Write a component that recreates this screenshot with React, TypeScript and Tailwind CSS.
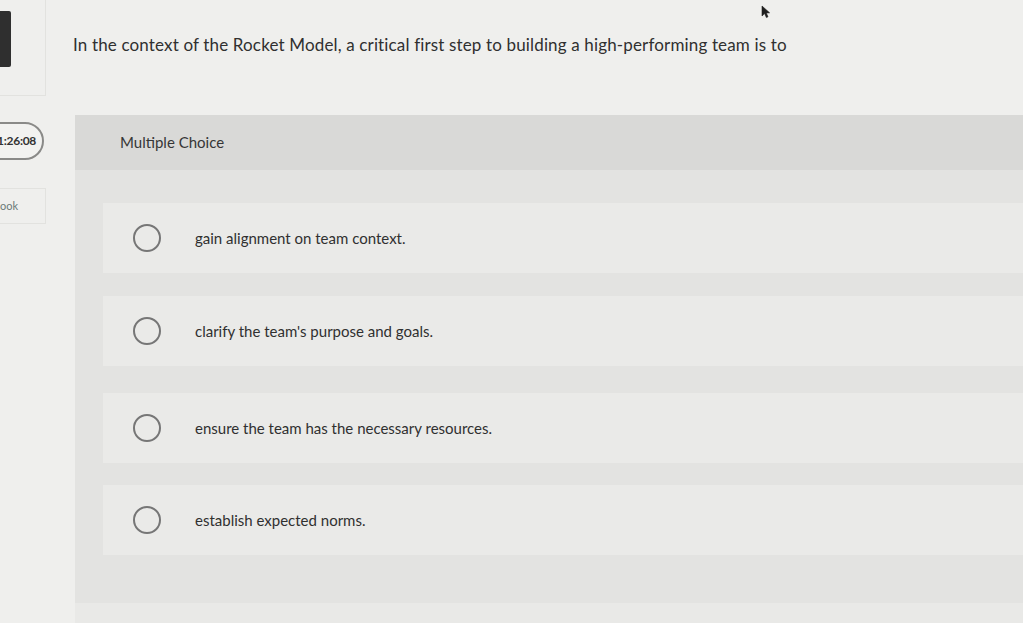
import React from 'react';

const OPTIONS = [
  'gain alignment on team context.',
  "clarify the team's purpose and goals.",
  'ensure the team has the necessary resources.',
  'establish expected norms.',
];

function Cursor() {
  return (
    <svg className="absolute left-[761px] top-[5px]" width="10" height="14" viewBox="0 0 10 14">
      <path d="M1 1 L1 11 L3.6 8.6 L5.4 12.6 L7 11.8 L5.3 8 L8.6 7.8 Z" fill="#1f1f1f" stroke="#1f1f1f" strokeWidth="0.6" />
    </svg>
  );
}

function OptionRow({ label, gapClass }: { label: string; gapClass: string }) {
  return (
    <div className={gapClass}>
      <div className="flex h-[70px] items-center bg-[#eaeae8] pl-[30px]">
        <span className="h-[28px] w-[28px] shrink-0 rounded-full border-2 border-[#767676]" />
        <span className="ml-[34px] text-[15px] text-[#303030]">{label}</span>
      </div>
    </div>
  );
}

export default function App() {
  return (
    <div
      className="relative flex h-[623px] w-full overflow-hidden bg-[#efefed]"
      style={{ fontFamily: 'Lato, "Open Sans", sans-serif' }}
    >
      <aside className="flex w-[46px] shrink-0 flex-col">
        <div className="h-[96px] shrink-0 border-r border-b border-[#e2e2df] pt-[11px]">
          <div className="h-[56px] w-[11px] rounded-r-[2px] bg-[#2f2f2f]" />
        </div>
        <div className="-ml-[22px] mt-[26px] flex h-[38px] w-[66px] shrink-0 items-center justify-end overflow-hidden rounded-full border-2 border-[#8a8a88] bg-[#f2f2f0] pr-[6px]">
          <span className="text-[12px] font-bold tracking-[-0.3px] text-[#333]">1:26:08</span>
        </div>
        <div className="mt-[28px] flex h-[36px] shrink-0 items-center border-r border-t border-b border-[#e2e2df]">
          <span className="text-[11px] text-[#6b7a77]">ook</span>
        </div>
      </aside>

      <main className="flex flex-1 flex-col">
        <div className="h-[115px] shrink-0 pl-[27px] pt-[34px]">
          <p className="text-[17px] leading-[22px] tracking-[0.15px] text-[#303030]">
            In the context of the Rocket Model, a critical first step to building a high-performing team is to
          </p>
        </div>
        <section className="ml-[29px] flex flex-1 flex-col bg-[#e0e0de]">
          <div className="flex h-[55px] shrink-0 items-center bg-[#d9d9d7] pl-[45px]">
            <span className="text-[15px] text-[#363636]">Multiple Choice</span>
          </div>
          <div className="flex flex-1 flex-col bg-[#e3e3e1] pt-[33px]">
            <div className="ml-[28px] flex flex-col">
              <OptionRow label={OPTIONS[0]} gapClass="pb-[23px]" />
              <OptionRow label={OPTIONS[1]} gapClass="pb-[27px]" />
              <OptionRow label={OPTIONS[2]} gapClass="pb-[22px]" />
              <OptionRow label={OPTIONS[3]} gapClass="" />
            </div>
            <div className="mt-[48px] flex-1 bg-[#e9e9e7]" />
          </div>
        </section>
      </main>
      <Cursor />
    </div>
  );
}
